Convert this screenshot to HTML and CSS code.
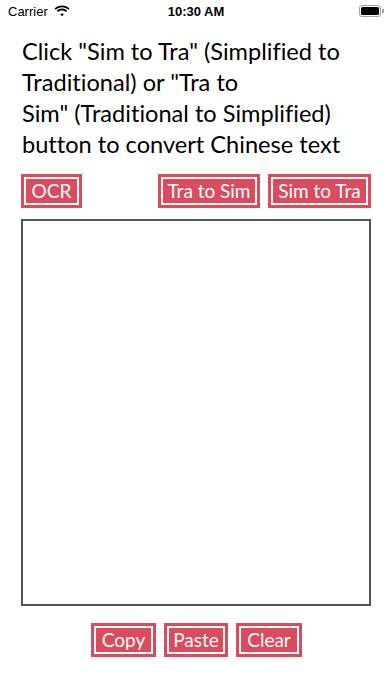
FILE: index.html
```html
<!DOCTYPE html>
<html>
<head>
<meta charset="utf-8">
<link rel="stylesheet" href="styles.css">
</head>
<body>
<div class="screen">
  <div class="status">
    <div class="status-left">
      <span class="carrier">Carrier</span>
      <svg class="wifi" width="16" height="12" viewBox="0 0 16 12">
        <path d="M8 2.2c2.4 0 4.6 0.9 6.3 2.5l1.2-1.3C13.5 1.5 10.9 0.4 8 0.4S2.5 1.5 0.5 3.4l1.2 1.3C3.4 3.1 5.6 2.2 8 2.2z" fill="#000"/>
        <path d="M8 5.4c1.5 0 2.9 0.6 4 1.6l1.2-1.3C11.8 4.4 10 3.6 8 3.6S4.2 4.4 2.8 5.7L4 7c1.1-1 2.5-1.6 4-1.6z" fill="#000"/>
        <path d="M8 8.6c0.7 0 1.3 0.3 1.8 0.7L8 11.3 6.2 9.3c0.5-0.4 1.1-0.7 1.8-0.7z" fill="#000"/>
      </svg>
    </div>
    <div class="time">10:30 AM</div>
    <div class="battery">
      <div class="battery-body"><div class="battery-fill"></div></div>
      <div class="battery-nub"></div>
    </div>
  </div>

  <div class="instructions">Click "Sim to Tra" (Simplified to<br>Traditional) or "Tra to<br>Sim" (Traditional to Simplified)<br>button to convert Chinese text</div>

  <div class="top-actions">
    <button class="btn btn-ocr"><span>OCR</span></button>
    <div class="convert-group">
      <button class="btn btn-tra"><span>Tra to Sim</span></button>
      <button class="btn btn-sim"><span>Sim to Tra</span></button>
    </div>
  </div>

  <div class="textbox"></div>

  <div class="bottom-actions">
    <button class="btn btn-copy"><span>Copy</span></button>
    <button class="btn btn-paste"><span>Paste</span></button>
    <button class="btn btn-clear"><span>Clear</span></button>
  </div>
</div>
</body>
</html>
```

FILE: styles.css
```css
* { box-sizing: border-box; }
html, body { margin: 0; padding: 0; background: #fff; }
.screen {
  width: 392px;
  height: 696px;
  display: flex;
  flex-direction: column;
  font-family: "Lato", "Noto Sans", sans-serif;
}
.status {
  height: 22px;
  display: flex;
  align-items: center;
  justify-content: space-between;
  padding: 0 8px 0 8px;
  font-family: "Liberation Sans", "Inter", sans-serif;
  font-size: 13px;
  color: #000;
}
.status-left { display: flex; align-items: center; gap: 6px; width: 120px; }
.carrier { font-weight: 400; }
.wifi { display: block; }
.time { font-weight: 700; font-size: 13px; }
.battery { width: 120px; display: flex; justify-content: flex-end; align-items: center; }
.battery-body {
  width: 22px; height: 12px;
  border: 1px solid #a0a0a0;
  border-radius: 3px;
  padding: 1px;
}
.battery-fill { width: 100%; height: 100%; background: #000; border-radius: 1.5px; }
.battery-nub { width: 1.5px; height: 4px; background: #a0a0a0; margin-left: 1px; border-radius: 0 1px 1px 0; }

.instructions {
  margin: 14px 0 0 22px;
  font-size: 23.6px;
  line-height: 31px;
  color: #000;
  white-space: nowrap;
  font-variant-ligatures: none;
}
.top-actions {
  display: flex;
  justify-content: space-between;
  margin: 14px 21px 0 21px;
}
.convert-group { display: flex; gap: 8px; }
.btn {
  background: #db4b5e;
  padding: 3px;
  border: 0;
  margin: 0;
  height: 34px;
  cursor: pointer;
  font-family: inherit;
}
.btn span {
  display: block;
  height: 28px;
  border: 2px solid #fff;
  color: #fff;
  font-size: 19px;
  line-height: 23px;
  text-align: center;
  white-space: nowrap;
}
.btn-ocr { width: 61px; }
.btn-tra { width: 102px; }
.btn-sim { width: 103px; }
.btn-copy { width: 65px; }
.btn-paste { width: 64px; }
.btn-clear { width: 66px; }

.textbox {
  margin: 11px 21px 0 21px;
  height: 387px;
  border: 2px solid #555;
  background: #fff;
}
.bottom-actions {
  display: flex;
  justify-content: center;
  gap: 8px;
  margin-top: 17px;
  padding-left: 1px;
}
```
